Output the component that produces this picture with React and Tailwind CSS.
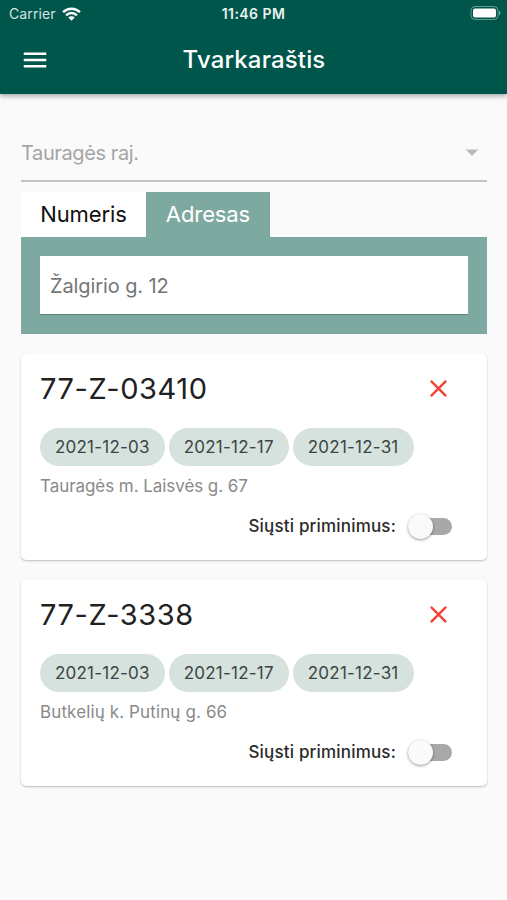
import React, { useState } from 'react';
import { MdMenu, MdClose, MdArrowDropDown } from 'react-icons/md';

const schedules = [
  {
    id: '77-Z-03410',
    dates: ['2021-12-03', '2021-12-17', '2021-12-31'],
    address: 'Tauragės m. Laisvės g. 67',
    tracking: 'tracking-[-0.06px]'
  },
  {
    id: '77-Z-3338',
    dates: ['2021-12-03', '2021-12-17', '2021-12-31'],
    address: 'Butkelių k. Putinų g. 66',
    tracking: 'tracking-[0.12px]'
  }
];

const StatusBar = () => (
  <div className="grid h-[27px] grid-cols-3 items-center px-[9px]">
    <div className="flex items-center gap-[6px]">
      <span className="text-[14px] tracking-[0.1px] text-[#d3e3e0]">Carrier</span>
      <svg width="19" height="14" viewBox="0 0 19 14" fill="none" stroke="#fff" strokeWidth="2.5">
        <path d="M1.1 5.2a12 12 0 0 1 16.8 0" />
        <path d="M4.1 8.3a7.7 7.7 0 0 1 10.8 0" />
        <path d="M9.5 13.8 6.3 10.6a4.6 4.6 0 0 1 6.4 0z" fill="#fff" stroke="none" />
      </svg>
    </div>
    <span className="text-center text-[14px] font-semibold tracking-[0.45px] text-[#e8f1ef]">11:46 PM</span>
    <svg className="-mr-[3px] justify-self-end" width="31" height="15" viewBox="0 0 31 15">
      <rect x="1" y="0.5" width="27" height="13" rx="4" fill="none" stroke="#fff" strokeOpacity="0.4" />
      <rect x="3" y="2.5" width="23" height="9" rx="2" fill="#fff" />
      <path d="M29 4.7v4.6a2.5 2.5 0 0 0 0-4.6z" fill="#fff" fillOpacity="0.45" />
    </svg>
  </div>
);

const Header = () => (
  <header className="h-[94px] bg-[#00564a] text-white shadow-[0_2px_5px_rgba(0,0,0,0.35)]">
    <StatusBar />
    <div className="grid h-[65px] grid-cols-[70px_1fr_70px] items-center">
      <button className="justify-self-center">
        <MdMenu size={30} />
      </button>
      <h1 className="pl-px pt-px text-center text-[24px] font-medium tracking-[0.15px]">Tvarkaraštis</h1>
    </div>
  </header>
);

const ScheduleCard = ({ schedule }) => {
  const [remind, setRemind] = useState(false);

  return (
    <div className="flex h-[206px] flex-col rounded-[5px] bg-white px-[19px] pt-[14px] shadow-[0_1px_2px_rgba(0,0,0,0.25)]">
      <div className="flex h-10 items-center justify-between pr-[15px]">
        <h2 className="pt-0.5 text-[29px] tracking-[0.6px] text-[#212121]">{schedule.id}</h2>
        <button className="text-[#f44336]">
          <MdClose size={29} />
        </button>
      </div>
      <div className="mt-5 flex gap-1">
        {schedule.dates.map((date) => (
          <span key={date} className="flex h-[38px] items-center rounded-full bg-[#d5e2de] px-[15px] pt-0.5 text-[17px] tracking-[0.22px] text-[#3c4543]">
            {date}
          </span>
        ))}
      </div>
      <p className={`mt-2 text-[17px] leading-6 text-[#8a8a8a] ${schedule.tracking}`}>{schedule.address}</p>
      <div className="mt-[9px] flex h-[38px] items-center justify-end pr-4">
        <span className="pt-0.5 text-[17px] font-medium tracking-[0.18px] text-[#2b2b2b]">Siųsti priminimus:</span>
        <button
          onClick={() => setRemind(!remind)}
          className={`ml-3 flex h-[17px] w-11 items-center rounded-full ${remind ? 'justify-end bg-[#7da9a0]' : 'bg-[#a8a8a8]'}`}
        >
          <span className="size-[25px] rounded-full bg-[#fafafa] shadow-[0_1px_3px_rgba(0,0,0,0.4)]" />
        </button>
      </div>
    </div>
  );
};

const App = () => {
  return (
    <div className="min-h-screen bg-[#fafafa] font-['Inter',sans-serif]">
      <Header />
      <main className="pl-[21px] pr-5 pt-[30px]">
        <div className="flex h-[58px] items-center justify-between border-b-2 border-[#c2c2c2]">
          <span className="pt-0.5 text-[20px] tracking-[-0.4px] text-[#a5a5a5]">Tauragės raj.</span>
          <MdArrowDropDown size={30} className="text-[#b9b9b9]" />
        </div>

        {/* Paieškos skirtukai */}
        <div className="mt-[10px] flex h-[45px] text-[22px] tracking-[-0.1px]">
          <button className="w-[125px] bg-white text-[#111]">Numeris</button>
          <button className="w-[124px] bg-[#7da9a0] text-white">Adresas</button>
        </div>
        <div className="bg-[#7da9a0] p-[19px]">
          <div className="flex h-[59px] items-center border-b border-[#5f857c] bg-white px-[10px] pt-0.5 text-[20px] tracking-[-0.1px] text-[#757575]">
            Žalgirio g. 12
          </div>
        </div>

        <div className="mt-5 space-y-5">
          {schedules.map((schedule) => (
            <ScheduleCard key={schedule.id} schedule={schedule} />
          ))}
        </div>
      </main>
    </div>
  );
};

export default App;
